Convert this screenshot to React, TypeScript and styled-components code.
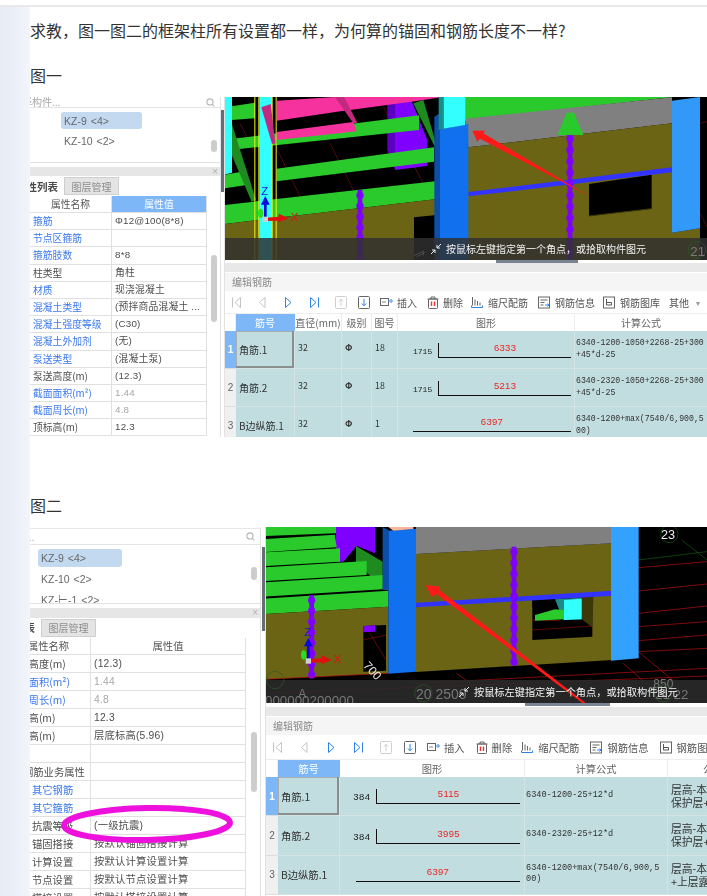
import React from "react";
import styled, { createGlobalStyle } from "styled-components";

const cjk = `"Noto Sans CJK SC", "Noto Sans", sans-serif`;
const latin = `"Liberation Sans", "Noto Sans CJK SC", sans-serif`;
const mono = `"Liberation Mono", "Noto Sans CJK SC", monospace`;

const Global = createGlobalStyle`
  html, body { margin: 0; padding: 0; height: 896px; overflow: hidden; background: #fff; }
  * { box-sizing: border-box; }
`;

const Page = styled.div`
  width: 707px;
  height: 896px;
  overflow: hidden;
  display: flex;
  flex-direction: column;
  font-family: ${cjk};
`;
const TopStrip = styled.div`
  height: 7px;
  flex: none;
  background: #fff;
  border-bottom: 2px solid #e9e9eb;
`;
const Body = styled.div`
  flex: 1;
  display: flex;
  min-height: 0;
`;
const Gutter = styled.div`
  width: 30px;
  flex: none;
  background: linear-gradient(90deg, #e6ebf6 0%, #edf1f9 70%, #f3f5fb 100%);
`;
const Main = styled.main`
  flex: 1;
  min-width: 0;
  padding-top: 11px;
  background: #fff;
`;
const Para = styled.p<{ $top: number }>`
  margin: ${(p) => p.$top}px 0 10px;
  font-size: 16px;
  line-height: 24px;
  color: #333;
  white-space: nowrap;
`;

const Shot = styled.div<{ $h: number }>`
  position: relative;
  height: ${(p) => p.$h}px;
  display: flex;
  overflow: hidden;
  background: #fff;
  filter: blur(0.45px);
`;

/* ---------- left panel ---------- */
const Panel = styled.section<{ $w: number }>`
  position: relative;
  width: ${(p) => p.$w}px;
  flex: none;
  overflow: hidden;
  border-right: 1px solid #e2e2e2;
`;
const SearchRow = styled.div<{ $h: number; $top: number; $lined?: boolean }>`
  height: ${(p) => p.$h}px;
  margin-top: ${(p) => p.$top}px;
  display: flex;
  align-items: center;
  justify-content: space-between;
  padding-right: 5px;
  overflow: hidden;
  border-bottom: 1px solid #e4e4e4;
  border-top: ${(p) => (p.$lined ? "1px solid #e8e8e8" : "0")};
`;
const Placeholder = styled.span<{ $shift: number }>`
  margin-left: ${(p) => p.$shift}px;
  font-size: 10px;
  line-height: 10px;
  color: #a8a8a8;
  white-space: nowrap;
`;
const Tree = styled.div<{ $h: number; $pad: number; $step: number }>`
  height: ${(p) => p.$h}px;
  padding-top: ${(p) => p.$pad}px;
  margin-bottom: 4px;
  border-bottom: 1px solid #e2e2e2;
  overflow: hidden;
  display: flex;
  flex-direction: column;
  gap: ${(p) => p.$step}px;
`;
const TreeItem = styled.div<{ $x: number; $w: number; $on?: boolean; $h: number }>`
  flex: none;
  margin-left: ${(p) => p.$x}px;
  width: ${(p) => p.$w}px;
  height: ${(p) => p.$h}px;
  padding-left: 3px;
  display: flex;
  align-items: center;
  gap: 4px;
  border-radius: 3px;
  background: ${(p) => (p.$on ? "#c3d9f0" : "transparent")};
  font-family: ${latin};
  font-size: 10.5px;
  color: #686868;
  white-space: nowrap;
`;
const Count = styled.span`
  font-size: 10.5px;
`;
const CloseBar = styled.div<{ $h: number }>`
  height: ${(p) => p.$h}px;
  background: #e6e6e6;
  display: flex;
  align-items: center;
  justify-content: flex-end;
  padding-right: 2px;
  font-family: ${latin};
  font-size: 10px;
  line-height: 9px;
  color: #b0b0b0;
`;
const Tabs = styled.div<{ $h: number; $shift: number }>`
  height: ${(p) => p.$h}px;
  margin-left: ${(p) => p.$shift}px;
  padding-top: 1px;
  display: flex;
  font-size: 10px;
`;
const Tab = styled.div<{ $on?: boolean }>`
  width: ${(p) => (p.$on ? 54 : 55)}px;
  height: 18px;
  display: flex;
  align-items: center;
  justify-content: ${(p) => (p.$on ? "flex-start" : "center")};
  padding-left: ${(p) => (p.$on ? 6 : 0)}px;
  font-size: ${(p) => (p.$on ? 10.5 : 10)}px;
  font-weight: ${(p) => (p.$on ? 700 : 400)};
  color: ${(p) => (p.$on ? "#4a4a4a" : "#8d8d8d")};
  background: ${(p) => (p.$on ? "#fff" : "#e4e4e4")};
  border: ${(p) => (p.$on ? "0" : "1px solid #cfcfcf")};
  white-space: nowrap;
`;
const Props = styled.div<{ $name: number; $value: number; $shift: number; $size: number }>`
  width: ${(p) => p.$name + p.$value}px;
  margin-left: ${(p) => p.$shift}px;
  font-size: ${(p) => p.$size}px;
  border-right: 1px solid #e0e0e0;
`;
const PropRow = styled.div<{ $name: number; $h: number }>`
  display: grid;
  grid-template-columns: ${(p) => p.$name}px 1fr;
  height: ${(p) => p.$h}px;
  line-height: ${(p) => p.$h - 1}px;
  border-bottom: 1px solid #e0e0e0;
  white-space: nowrap;
`;
const HeadName = styled.div`
  text-align: center;
  color: #555;
  border-right: 1px solid #e0e0e0;
`;
const HeadValue = styled.div<{ $on?: boolean }>`
  text-align: center;
  color: ${(p) => (p.$on ? "#fff" : "#555")};
  background: ${(p) => (p.$on ? "#7db7f7" : "transparent")};
`;
const NameCell = styled.div<{ $link?: boolean; $indent: number }>`
  padding-left: ${(p) => p.$indent}px;
  color: ${(p) => (p.$link ? "#3b78ee" : "#4e4e4e")};
  border-right: 1px solid #e0e0e0;
  overflow: hidden;
`;
const ValueCell = styled.div<{ $muted?: boolean }>`
  display: flex;
  justify-content: space-between;
  padding: 0 6px 0 3px;
  color: ${(p) => (p.$muted ? "#a6a6a6" : "#4e4e4e")};
  font-family: ${latin}, ${cjk};
  letter-spacing: 0.2px;
`;
const Thumb = styled.div<{ $top: number; $h: number }>`
  position: absolute;
  right: 3px;
  top: ${(p) => p.$top}px;
  width: 6px;
  height: ${(p) => p.$h}px;
  border-radius: 3px;
  background: #cdcdcd;
`;
const Splitter = styled.div<{ $w: number; $top: number; $h: number }>`
  width: ${(p) => p.$w}px;
  flex: none;
  padding: ${(p) => p.$top}px 0 0 ${(p) => p.$w - 3}px;
  &::before {
    content: "";
    display: block;
    width: 3px;
    height: ${(p) => p.$h}px;
    background: #666d76;
  }
`;
const Ring = styled.svg`
  position: absolute;
  left: 30px;
  top: 274px;
  width: 180px;
  height: 50px;
  overflow: visible;
`;

/* ---------- right pane ---------- */
const Pane = styled.section`
  flex: 1;
  min-width: 0;
  overflow: hidden;
  display: flex;
  flex-direction: column;
  border-left: 1px solid #e2e2e2;
`;
const Viewport = styled.div<{ $h: number }>`
  position: relative;
  height: ${(p) => p.$h}px;
  flex: none;
  margin-left: -1px;
`;
const Scene = styled.svg`
  display: block;
  width: 100%;
  height: 100%;
`;
const Caption = styled.div<{ $left: number; $size: number }>`
  position: absolute;
  left: ${(p) => p.$left}px;
  bottom: 4px;
  display: flex;
  align-items: center;
  gap: 4px;
  font-size: ${(p) => p.$size}px;
  line-height: 14px;
  color: #f2f2f2;
  white-space: nowrap;
`;
const Handle = styled.div<{ $left: number; $w: number }>`
  position: absolute;
  left: ${(p) => p.$left}px;
  bottom: -3px;
  width: ${(p) => p.$w}px;
  height: 3px;
  background: #7a8492;
`;
const GreyBar = styled.div<{ $top: number }>`
  height: 9px;
  flex: none;
  margin-top: ${(p) => p.$top}px;
  background: #e8e8e8;
`;
const EditorTitle = styled.div<{ $left: number; $top: number }>`
  height: 18px;
  flex: none;
  margin-top: ${(p) => p.$top}px;
  padding-left: ${(p) => p.$left}px;
  background: #f5f5f5;
  font-size: 10px;
  line-height: 18px;
  color: #8a8a8a;
`;
const Toolbar = styled.div<{ $left: number; $h: number; $size: number }>`
  height: ${(p) => p.$h}px;
  flex: none;
  padding-left: ${(p) => p.$left}px;
  display: flex;
  align-items: center;
  font-size: ${(p) => p.$size}px;
  color: #555;
  white-space: nowrap;
`;
const NavBtn = styled.div<{ $w: number }>`
  width: ${(p) => p.$w}px;
  flex: none;
  display: flex;
  align-items: center;
  height: 14px;
`;
const Action = styled.div<{ $gap: number }>`
  flex: none;
  display: flex;
  align-items: center;
  gap: 4px;
  margin-right: ${(p) => p.$gap}px;
`;
const Caret = styled.span`
  font-size: 8px;
  color: #999;
  margin-left: 3px;
`;
const Grid = styled.div<{ $cols: string; $size: number }>`
  display: grid;
  grid-template-columns: ${(p) => p.$cols};
  font-size: ${(p) => p.$size}px;
  border-top: 1px solid #eee;
`;
const HeadCell = styled.div<{ $on?: boolean; $h: number }>`
  height: ${(p) => p.$h}px;
  line-height: ${(p) => p.$h}px;
  text-align: center;
  white-space: nowrap;
  overflow: hidden;
  color: ${(p) => (p.$on ? "#fff" : "#666")};
  background: ${(p) => (p.$on ? "#7db7f7" : "#fff")};
  border-right: 1px solid ${(p) => (p.$on ? "#7db7f7" : "#ececec")};
`;
const Cell = styled.div<{ $h: number; $focus?: boolean }>`
  height: ${(p) => p.$h}px;
  display: flex;
  align-items: center;
  padding-left: 3px;
  background: #c1dddf;
  border-right: 1px solid #d3e4e5;
  border-bottom: 1px solid #d3e4e5;
  color: #333;
  white-space: nowrap;
  overflow: hidden;
  box-shadow: ${(p) => (p.$focus ? "inset -1px -1px 0 1px #8b8f90, inset 0 0 0 1px #a8aeae" : "none")};
`;
const SimCell = styled(Cell)`
  font-size: 8.8px;
  letter-spacing: 0.2px;
  padding-bottom: 4px;
`;
const NumCell = styled.div<{ $h: number; $on?: boolean }>`
  height: ${(p) => p.$h}px;
  display: flex;
  align-items: center;
  justify-content: center;
  font-family: ${latin};
  font-size: 10px;
  color: ${(p) => (p.$on ? "#fff" : "#666")};
  font-weight: ${(p) => (p.$on ? 700 : 400)};
  background: ${(p) => (p.$on ? "#7db7f7" : "#f0f0f0")};
  border-bottom: 1px solid #ddd;
`;
const Formula = styled.div<{ $size: number }>`
  font-family: ${mono};
  font-size: ${(p) => p.$size}px;
  line-height: 11.7px;
  white-space: pre;
  color: #333;
  margin-left: -2px;
  padding-bottom: 1px;
`;
const Desc = styled.div`
  font-size: 10.8px;
  line-height: 13px;
  white-space: pre;
  color: #333;
`;
const ShapeWrap = styled.div<{ $left: number; $right: number; $bottom: number }>`
  flex: 1;
  min-width: 0;
  align-self: stretch;
  display: flex;
  align-items: flex-end;
  gap: 6px;
  margin-left: -3px;
  padding: 0 ${(p) => p.$right}px ${(p) => p.$bottom}px ${(p) => p.$left}px;
`;
const HookNum = styled.span<{ $size: number }>`
  font-family: ${mono};
  font-size: ${(p) => p.$size}px;
  color: #222;
  line-height: 10px;
  margin-bottom: 1px;
`;
const Bar = styled.div<{ $hook?: boolean }>`
  flex: 1;
  height: 15px;
  border-bottom: 1.5px solid #111;
  border-left: ${(p) => (p.$hook ? "1.5px solid #111" : "0")};
  text-align: center;
  font-family: ${latin};
  font-size: 9.5px;
  line-height: 9px;
  letter-spacing: 0.3px;
  color: #ee2222;
`;

/* ---------- toolbar icons ---------- */
const Ico: React.FC<{ children: React.ReactNode; w?: number }> = ({ children, w = 12 }) => (
  <svg width={w} height="13" viewBox={`0 0 ${w} 13`} fill="none" strokeWidth="1">
    {children}
  </svg>
);
const IconFirst = () => (
  <Ico><path d="M1.5 1.5v10M9.5 1.5 4 6.5l5.5 5z" stroke="#c4c4c4" /></Ico>
);
const IconPrev = () => (
  <Ico><path d="M8 1.5 2.5 6.5 8 11.5z" stroke="#c4c4c4" /></Ico>
);
const IconNext = () => (
  <Ico><path d="M2.5 1.5 8 6.5l-5.5 5z" stroke="#2d83e6" /></Ico>
);
const IconLast = () => (
  <Ico><path d="M1.5 1.5 7 6.5l-5.5 5zM9.5 1.5v10" stroke="#2d83e6" /></Ico>
);
const IconUp = () => (
  <Ico>
    <rect x="0.5" y="0.5" width="11" height="12" rx="1" stroke="#cfcfcf" />
    <path d="M6 10V3.5M3.8 5.5 6 3.2l2.2 2.3" stroke="#cfcfcf" />
  </Ico>
);
const IconDown = () => (
  <Ico>
    <rect x="0.5" y="0.5" width="11" height="12" rx="1" stroke="#666" />
    <path d="M6 3v6.5M3.8 7.5 6 9.8l2.2-2.3" stroke="#2d83e6" />
  </Ico>
);
const IconInsert = () => (
  <Ico w={13}>
    <rect x="0.5" y="2.5" width="8" height="7" stroke="#666" />
    <path d="M2 6h4" stroke="#888" />
    <path d="M8.5 5h3M10.5 3l2 2-2 2" stroke="#2d83e6" />
  </Ico>
);
const IconTrash = () => (
  <Ico>
    <path d="M.5 3h11M4 3V1h4v2" stroke="#666" />
    <rect x="1.5" y="3" width="9" height="9.5" rx="1" stroke="#666" />
    <path d="M4.5 5.5v4.5M7.5 5.5v4.5" stroke="#e33" strokeWidth="1.4" />
  </Ico>
);
const IconChart = () => (
  <Ico w={13}>
    <path d="M1.5 1v8.5M4 3.5v6M6.5 5v4.5M9 6.5v3" stroke="#666" />
    <path d="M.5 11.5h11M.5 9.5v2M11.5 9.5v2" stroke="#2d83e6" />
  </Ico>
);
const IconInfo = () => (
  <Ico w={13}>
    <rect x="0.5" y="1" width="11" height="11" stroke="#666" />
    <path d="M2.5 4h7M2.5 6.5h4M2.5 9h3" stroke="#666" />
    <path d="M7 9h4M9.5 7.5l1.5 1.5-1.5 1.5" stroke="#2d83e6" />
  </Ico>
);
const IconLib = () => (
  <Ico w={13}>
    <rect x="0.5" y="1" width="11" height="11" stroke="#666" />
    <path d="M3.5 3v6h5V6.5h-5" stroke="#555" />
  </Ico>
);
const IconSearch = () => (
  <svg width="9" height="9" viewBox="0 0 10 10" fill="none" stroke="#b5b5b5" strokeWidth="1.2">
    <circle cx="4.4" cy="4.4" r="3.4" />
    <path d="M7 7l2.4 2.4" />
  </svg>
);
const IconCorner = () => (
  <svg width="12" height="12" viewBox="0 0 12 12" fill="none" stroke="#eee" strokeWidth="1">
    <path d="M11 1 7 5M7 2v3h3M1 11l4-4M2 7h3v3" />
  </svg>
);

/* ---------- 3D scene primitives ---------- */
const Rebar: React.FC<{ x: number; y1: number; y2: number; step?: number }> = ({ x, y1, y2, step = 33 }) => {
  const beads: number[] = [];
  for (let y = y1 + 16; y < y2; y += step) beads.push(y);
  return (
    <g fill="#7f00ff">
      <rect x={x - 7} y={y1} width={14} height={y2 - y1} />
      {beads.map((y) => (
        <circle key={y} cx={x} cy={y} r={11} />
      ))}
    </g>
  );
};
const Poly: React.FC<{ p: string; f: string }> = ({ p, f }) => <polygon points={p} fill={f} />;

const GREEN = "#2ac92c";
const DGREEN = "#1f8a20";
const OLIVE = "#6b6414";
const AXIS = `"Liberation Sans", sans-serif`;

const Gizmo: React.FC<{ x: number; y: number }> = ({ x, y }) => (
  <g>
    <ellipse cx={x - 14} cy={y - 18} rx={8} ry={14} fill="#22e022" />
    <Poly p={`${x - 4},${y} ${x - 4},${y - 44} ${x - 13},${y - 44} ${x},${y - 70} ${x + 13},${y - 44} ${x + 4},${y - 44} ${x + 4},${y}`} f="#0a0ae0" />
    <Poly p={`${x},${y - 5} ${x + 40},${y - 8} ${x + 40},${y - 17} ${x + 70},${y - 3} ${x + 40},${y + 9} ${x + 40},${y + 4} ${x},${y + 5}`} f="#e01010" />
    <rect x={x - 8} y={y - 8} width={16} height={16} fill="#cfcfcf" />
    <text x={x + 76} y={y + 6} fontFamily={AXIS} fontSize="34" fill="#e01010">X</text>
    <text x={x - 12} y={y - 74} fontFamily={AXIS} fontSize="34" fill="#1414e0">Z</text>
  </g>
);

const SceneOne = () => (
  <Scene viewBox="12 21 1449 489" preserveAspectRatio="none">
    <rect x="12" y="21" width="1449" height="489" fill="#000" />
    <g stroke="#a01414" strokeWidth="1.5" fill="none">
      <path d="M170 175 250 340M330 160 400 300M490 50 620 300M60 100 100 180" />
      <path d="M1440 100 1461 95M1440 370 1461 410M1400 430 1461 510" />
    </g>
    <Poly p="502,21 525,21 525,238 502,180" f="#5c00c0" />
    <Poly p="525,21 570,21 622,150 622,228 525,240" f="#7f00ff" />
    <Poly p="12,52 105,38 105,85 12,92" f={GREEN} />
    <Poly p="12,150 597,76 597,120 12,182" f={GREEN} />
    <Poly p="12,255 80,242 80,285 12,295" f={GREEN} />
    <Poly p="170,236 642,172 642,215 170,274" f={GREEN} />
    <Poly p="35,100 12,112 12,140 95,335 108,330" f={DGREEN} />
    <Poly p="580,40 610,30 645,150 645,172" f={DGREEN} />
    <Poly p="12,21 36,21 36,248 12,254" f="#33ffff" />
    <Poly p="12,345 658,272 658,326 12,402" f={GREEN} />
    <Poly p="12,402 658,326 658,510 12,510" f={OLIVE} />
    <Poly p="582,382 650,375 650,510 582,510" f="#000" />
    <Rebar x={420} y1={300} y2={510} step={32} />
    <rect x="118" y="21" width="38" height="489" fill="#33ffff" />
    <g fill="#f2f21a">
      <rect x="103" y="21" width="3" height="489" />
      <rect x="115" y="21" width="3" height="489" />
      <rect x="155" y="21" width="3" height="489" />
      <rect x="167" y="21" width="3" height="489" />
    </g>
    <Poly p="124,52 152,42 166,160 156,162" f="#c2297f" />
    <Poly p="170,32 345,21 668,21 585,34 362,64 170,92" f="#f5329d" />
    <Poly p="345,21 372,21 412,98 400,100" f="#c2297f" />
    <Poly p="170,126 400,96 410,124 170,150" f="#f5329d" />
    <path d="M170 150v10h18M385 125v10h25v-12" stroke={GREEN} strokeWidth="2" fill="none" />
    <Poly p="735,21 1360,21 735,90" f={GREEN} />
    <Poly p="735,86 1356,22 1356,100 745,172" f="#808080" />
    <Poly p="745,172 1356,100 1356,428 1440,415 1440,510 660,510 660,300" f={OLIVE} />
    <Poly p="1107,282 1295,254 1295,356 1107,378" f="#000" />
    <path d="M1107 378 1295 356" stroke="#3c3808" strokeWidth="3" fill="none" />
    <Poly p="745,306 1356,232 1356,247 745,319" f="#3333ff" />
    <Rebar x={1050} y1={130} y2={510} step={34} />
    <Poly p="1040,68 1062,68 1090,135 1012,135" f={GREEN} />
    <Poly p="643,80 660,70 660,510 643,510" f="#0d4ea8" />
    <Poly p="660,118 745,102 745,510 660,510" f="#1070ee" />
    <Poly p="670,21 736,21 736,105 670,116" f="#33ffff" />
    <Poly p="656,21 670,21 670,116 656,120" f="#14908a" />
    <Poly p="1356,32 1440,21 1440,415 1356,428" f="#3399f8" />
    <Poly p="1112,321 780,146 772,155 757,122 796,122 790,130" f="#ff1a1a" />
    <Gizmo x={136} y={388} />
    <rect x="12" y="444" width="1449" height="66" fill="#303030" fillOpacity="0.84" />
    <path d="M582 497 612 483M590 500l24-12M610 497v-12" stroke="#888" fill="none" />
    <circle cx="1431" cy="480" r="26" fill="none" stroke="#2b5a2b" strokeWidth="2" />
    <text x="1411" y="497" fontFamily={AXIS} fontSize="40" fill="#7a7a7a">21</text>
  </Scene>
);

const SceneTwo = () => (
  <Scene viewBox="15 21 1326 528" preserveAspectRatio="none">
    <rect x="15" y="21" width="1326" height="528" fill="#000" />
    <g stroke="#c01010" strokeWidth="2" fill="none">
      <path d="M1135 143 1341 125M1135 213 1341 192M1135 280 1341 258M1135 320 1341 305M1135 362 1341 345M1135 395 1341 385" />
      <path d="M468 490 1341 445M15 520 1341 468M1135 395 1250 490M1090 430 1180 510M590 460 700 540M820 320 990 320" />
    </g>
    <g stroke="#1c7a1c" strokeWidth="1.5" fill="none">
      <path d="M1135 120 1341 95M1265 60 1341 120" />
      <circle cx="1228" cy="42" r="26" />
    </g>
    <text x="1203" y="57" fontFamily={AXIS} fontSize="38" fill="#f0f0f0">23</text>
    <Poly p="228,21 345,21 345,100 290,78 250,125 228,125" f="#7f00ff" />
    <Poly p="345,40 368,60 368,115 345,100" f="#000" />
    <Poly p="15,21 228,21 228,40 15,48" f={GREEN} />
    <Poly p="15,57 225,44 230,82 15,96" f={GREEN} />
    <Poly p="15,97 240,85 240,125 15,138" f={GREEN} />
    <Poly p="288,78 368,125 368,205 288,125" f={DGREEN} />
    <Poly p="15,142 320,123 320,165 15,183" f={GREEN} />
    <Poly p="15,187 368,165 368,208 15,230" f={GREEN} />
    <Poly p="15,236 385,212 385,260 15,282" f={GREEN} />
    <Poly p="15,282 385,260 385,460 15,478" f={OLIVE} />
    <Poly p="310,318 378,315 378,452 310,455" f="#000" />
    <path d="M310 360 378 345M330 340 378 420" stroke="#c01010" strokeWidth="1.5" />
    <Poly p="310,318 345,316 345,335 310,337" f="#7f00ff" />
    <Rebar x={155} y1={225} y2={472} step={32} />
    <Poly p="468,102 1056,70 1056,420 468,456" f={OLIVE} />
    <Poly p="468,21 1056,21 1056,70 468,102" f="#808080" />
    <Poly p="817,240 997,230 997,350 817,360" f="#000" />
    <Poly p="965,232 1000,230 997,322 965,298" f="#3c3808" />
    <path d="M817 330 997 318M817 300 900 302" stroke="#c01010" strokeWidth="1.5" />
    <Poly p="885,238 965,233 965,298 910,300" f="#1f8a8a" />
    <Poly p="912,240 965,236 965,298 912,300" f="#33ffff" />
    <Poly p="825,285 885,268 912,270 912,298 825,302" f={GREEN} />
    <Poly p="817,240 885,238 885,258 817,262" f="#000" />
    <Poly p="468,248 1056,212 1056,227 468,262" f="#3333ff" />
    <Rebar x={762} y1={80} y2={436} step={33} />
    <Poly p="368,21 385,30 385,210 368,210" f="#0d4ea8" />
    <Poly p="385,32 468,26 468,455 385,461" f="#1070ee" />
    <Poly p="385,21 460,21 460,27 400,32" f="#f6b59a" />
    <Poly p="1053,21 1136,21 1136,415 1053,422" f="#33a2ff" />
    <Gizmo x={145} y={423} />
    <rect x="15" y="480" width="1326" height="69" fill="#2a2a2a" fillOpacity="0.9" />
    <path d="M15 478 385 460" stroke="#c01010" strokeWidth="2" />
    <g fill="#777" fontFamily={AXIS}>
      <text x="468" y="538" fontSize="42">20 2500</text>
      <text x="1185" y="538" fontSize="40">21 22</text>
      <text x="1180" y="505" fontSize="36">850</text>
      <text x="115" y="535" fontSize="36">A</text>
      <text x="15" y="556" fontSize="40">000000200000</text>
      <circle cx="45" cy="480" r="26" fill="none" stroke="#2b5a2b" strokeWidth="2" />
      <circle cx="490" cy="520" r="26" fill="none" stroke="#2b5a2b" strokeWidth="2" />
      <circle cx="1210" cy="520" r="26" fill="none" stroke="#2b5a2b" strokeWidth="2" />
    </g>
    <text x="300" y="468" transform="rotate(48 338 462)" fontFamily={AXIS} fontSize="36" fill="#e8e8e8">700</text>
    <Poly p="985,555 975,555 528,221 515,232 497,195 540,200 538,210" f="#ff1a1a" />
  </Scene>
);

/* ---------- data ---------- */
type PropItem = { n: string; v?: string; link?: boolean; muted?: boolean; more?: boolean; indent?: number };
const propsOne: PropItem[] = [
  { n: "箍筋", v: "Φ12@100(8*8)", link: true },
  { n: "节点区箍筋", link: true },
  { n: "箍筋肢数", v: "8*8", link: true },
  { n: "柱类型", v: "角柱" },
  { n: "材质", v: "现浇混凝土", link: true },
  { n: "混凝土类型", v: "(预拌商品混凝土", link: true, more: true },
  { n: "混凝土强度等级", v: "(C30)", link: true },
  { n: "混凝土外加剂", v: "(无)", link: true },
  { n: "泵送类型", v: "(混凝土泵)", link: true },
  { n: "泵送高度(m)", v: "(12.3)" },
  { n: "截面面积(m²)", v: "1.44", link: true, muted: true },
  { n: "截面周长(m)", v: "4.8", link: true, muted: true },
  { n: "顶标高(m)", v: "12.3" },
];
const propsTwo: PropItem[] = [
  { n: "泵送高度(m)", v: "(12.3)" },
  { n: "截面面积(m²)", v: "1.44", link: true, muted: true },
  { n: "截面周长(m)", v: "4.8", link: true, muted: true },
  { n: "顶标高(m)", v: "12.3" },
  { n: "底标高(m)", v: "层底标高(5.96)" },
  { n: "" },
  { n: "钢筋业务属性", indent: 16 },
  { n: "其它钢筋", link: true, indent: 25 },
  { n: "其它箍筋", link: true, indent: 25 },
  { n: "抗震等级", v: "(一级抗震)", indent: 25 },
  { n: "锚固搭接", v: "按默认锚固搭接计算", indent: 25 },
  { n: "计算设置", v: "按默认计算设置计算", indent: 25 },
  { n: "节点设置", v: "按默认节点设置计算", indent: 25 },
  { n: "搭接设置", v: "按默认搭接设置计算", indent: 25 },
];

type PanelCfg = {
  w: number;
  search: { h: number; top: number; lined?: boolean; text: string; shift: number };
  tree: { h: number; pad: number; step: number; x: number; itemW: number; itemH: number; items: [string, string][] };
  bar: number;
  tabs: { h: number; shift: number };
  table: { name: number; value: number; shift: number; size: number; rowH: number; headOn: boolean; rows: PropItem[]; indent: number };
  thumbs: [number, number][];
};

const LeftPanel: React.FC<{ c: PanelCfg; children?: React.ReactNode }> = ({ c, children }) => (
  <Panel $w={c.w}>
    <SearchRow $h={c.search.h} $top={c.search.top} $lined={c.search.lined}>
      <Placeholder $shift={c.search.shift}>{c.search.text}</Placeholder>
      <IconSearch />
    </SearchRow>
    <Tree $h={c.tree.h} $pad={c.tree.pad} $step={c.tree.step}>
      {c.tree.items.map(([name, count], i) => (
        <TreeItem key={name} $x={c.tree.x} $w={c.tree.itemW} $h={c.tree.itemH} $on={i === 0}>
          {name}
          <Count>{count}</Count>
        </TreeItem>
      ))}
    </Tree>
    <CloseBar $h={c.bar}>×</CloseBar>
    <Tabs $h={c.tabs.h} $shift={c.tabs.shift}>
      <Tab $on>属性列表</Tab>
      <Tab>图层管理</Tab>
    </Tabs>
    <Props $name={c.table.name} $value={c.table.value} $shift={c.table.shift} $size={c.table.size}>
      <PropRow $name={c.table.name} $h={17}>
        <HeadName>属性名称</HeadName>
        <HeadValue $on={c.table.headOn}>属性值</HeadValue>
      </PropRow>
      {c.table.rows.map((r, i) => (
        <PropRow key={i} $name={c.table.name} $h={c.table.rowH}>
          <NameCell $link={r.link} $indent={r.indent ?? c.table.indent}>{r.n}</NameCell>
          <ValueCell $muted={r.muted}>
            <span>{r.v}</span>
            {r.more && <span>...</span>}
          </ValueCell>
        </PropRow>
      ))}
    </Props>
    {c.thumbs.map(([top, h]) => (
      <Thumb key={top} $top={top} $h={h} />
    ))}
    {children}
  </Panel>
);

const ToolRow: React.FC<{ nav: number; gaps: number[]; left: number; h: number; size: number; cut?: boolean }> = ({ nav, gaps, left, h, size, cut }) => (
  <Toolbar $left={left} $h={h} $size={size}>
    <NavBtn $w={nav}><IconFirst /></NavBtn>
    <NavBtn $w={nav}><IconPrev /></NavBtn>
    <NavBtn $w={nav}><IconNext /></NavBtn>
    <NavBtn $w={nav}><IconLast /></NavBtn>
    <NavBtn $w={nav - 3}><IconUp /></NavBtn>
    <NavBtn $w={nav - 4}><IconDown /></NavBtn>
    <Action $gap={gaps[0]}><IconInsert />插入</Action>
    <Action $gap={gaps[1]}><IconTrash />删除</Action>
    <Action $gap={gaps[2]}><IconChart />缩尺配筋</Action>
    <Action $gap={gaps[3]}><IconInfo />钢筋信息</Action>
    <Action $gap={gaps[4]}><IconLib />钢筋图库</Action>
    {!cut && <Action $gap={0}>其他<Caret>▾</Caret></Action>}
  </Toolbar>
);

const Shape: React.FC<{ hook?: string; label: string; left: number; right: number; hookSize: number; bottom: number }> = ({ hook, label, left, right, hookSize, bottom }) => (
  <ShapeWrap $left={left} $right={right} $bottom={bottom}>
    {hook && <HookNum $size={hookSize}>{hook}</HookNum>}
    <Bar $hook={!!hook}>{label}</Bar>
  </ShapeWrap>
);

const panelOne: PanelCfg = {
  w: 191,
  search: { h: 11, top: 0, text: "选择构件...", shift: -18 },
  tree: { h: 55, pad: 4, step: 3, x: 31, itemW: 81, itemH: 17, items: [["KZ-9", "<4>"], ["KZ-10", "<2>"]] },
  bar: 9,
  tabs: { h: 20, shift: -20 },
  table: { name: 82, value: 95, shift: 0, size: 9.8, rowH: 17.2, headOn: true, rows: propsOne, indent: 3 },
  thumbs: [[43, 12], [158, 67]],
};
const panelTwo: PanelCfg = {
  w: 231,
  search: { h: 17, top: 1, lined: true, text: "选择构件...", shift: -44 },
  tree: { h: 59, pad: 4, step: 3, x: 8, itemW: 84, itemH: 18, items: [["KZ-9", "<4>"], ["KZ-10", "<2>"], ["KZ-⊢-1", "<2>"]] },
  bar: 9.5,
  tabs: { h: 20.5, shift: -43 },
  table: { name: 84, value: 155, shift: -23, size: 10.3, rowH: 18, headOn: false, rows: propsTwo, indent: 1 },
  thumbs: [[40, 13], [205, 60]],
};

const EditorOne = () => {
  const H = 38;
  const rows = [
    { name: "角筋.1", d: "32", no: "18", hook: "1715", label: "6333", f: "6340-1200-1050+2268-25+300\n+45*d-25" },
    { name: "角筋.2", d: "32", no: "18", hook: "1715", label: "5213", f: "6340-2320-1050+2268-25+300\n+45*d-25" },
    { name: "B边纵筋.1", d: "32", no: "1", hook: undefined, label: "6397", f: "6340-1200+max(7540/6,900,5\n00)" },
  ];
  return (
    <Grid $cols="11px 59px 47px 30px 26px 177px 133px" $size={10}>
      <HeadCell $h={17} />
      <HeadCell $h={17} $on>筋号</HeadCell>
      <HeadCell $h={17}>直径(mm)</HeadCell>
      <HeadCell $h={17}>级别</HeadCell>
      <HeadCell $h={17}>图号</HeadCell>
      <HeadCell $h={17}>图形</HeadCell>
      <HeadCell $h={17}>计算公式</HeadCell>
      {rows.map((r, i) => (
        <React.Fragment key={r.name}>
          <NumCell $h={H} $on={i === 0}>{i + 1}</NumCell>
          <Cell $h={H} $focus={i === 0}>{r.name}</Cell>
          <SimCell $h={H}>{r.d}</SimCell>
          <SimCell $h={H}><b>Φ</b></SimCell>
          <SimCell $h={H}>{r.no}</SimCell>
          <Cell $h={H}>
            <Shape hook={r.hook} label={r.label} left={15} right={3} hookSize={8} bottom={r.hook ? 10 : 12} />
          </Cell>
          <Cell $h={H}><Formula $size={8.2}>{r.f}</Formula></Cell>
        </React.Fragment>
      ))}
    </Grid>
  );
};

const EditorTwo = () => {
  const H = 39.3;
  const rows = [
    { name: "角筋.1", hook: "384", label: "5115", f: "6340-1200-25+12*d", d: "层高-本层的露出\n保护层+节点设置" },
    { name: "角筋.2", hook: "384", label: "3995", f: "6340-2320-25+12*d", d: "层高-本层的露出\n保护层+节点设置" },
    { name: "B边纵筋.1", hook: undefined, label: "6397", f: "6340-1200+max(7540/6,900,5\n00)", d: "层高-本层的露出\n+上层露出长度" },
  ];
  return (
    <Grid $cols="12px 62px 185px 143px 112px" $size={10.3}>
      <HeadCell $h={17} />
      <HeadCell $h={17} $on>筋号</HeadCell>
      <HeadCell $h={17}>图形</HeadCell>
      <HeadCell $h={17}>计算公式</HeadCell>
      <HeadCell $h={17}>公式描述</HeadCell>
      {rows.map((r, i) => (
        <React.Fragment key={r.name}>
          <NumCell $h={H} $on={i === 0}>{i + 1}</NumCell>
          <Cell $h={H} $focus={i === 0}>{r.name}</Cell>
          <Cell $h={H}>
            <Shape hook={r.hook} label={r.label} left={r.hook ? 13 : 16} right={4} hookSize={9.6} bottom={r.hook ? 11 : 12} />
          </Cell>
          <Cell $h={H}><Formula $size={8.55}>{r.f}</Formula></Cell>
          <Cell $h={H}><Desc>{r.d}</Desc></Cell>
        </React.Fragment>
      ))}
    </Grid>
  );
};

const App: React.FC = () => (
  <>
    <Global />
    <Page>
      <TopStrip />
      <Body>
        <Gutter />
        <Main>
          <Para $top={0}>求教，图一图二的框架柱所有设置都一样，为何算的锚固和钢筋长度不一样?</Para>
          <Para $top={21}>图一</Para>
          <Shot $h={340}>
            <LeftPanel c={panelOne} />
            <Splitter $w={3} $top={13} $h={82} />
            <Pane>
              <Viewport $h={163}>
                <SceneOne />
                <Caption $left={206} $size={10}>
                  <IconCorner />
                  按鼠标左键指定第一个角点，或拾取构件图元
                </Caption>
                <Handle $left={272} $w={82} />
              </Viewport>
              <GreyBar $top={3} />
              <EditorTitle $left={7} $top={1}>编辑钢筋</EditorTitle>
              <ToolRow nav={26} gaps={[10, 8, 10, 8, 9]} left={6} h={22} size={10} />
              <EditorOne />
            </Pane>
          </Shot>
          <Para $top={56}>图二</Para>
          <Shot $h={369}>
            <LeftPanel c={panelTwo}>
              <Ring viewBox="0 0 180 50">
                <ellipse cx="87" cy="23" rx="83" ry="16" transform="rotate(-1 87 23)" fill="none" stroke="#ee11dd" strokeWidth="6" />
              </Ring>
            </LeftPanel>
            <Splitter $w={4} $top={20} $h={84} />
            <Pane>
              <Viewport $h={176}>
                <SceneTwo />
                <Caption $left={193} $size={10.2}>
                  <IconCorner />
                  按鼠标左键指定第一个角点，或拾取构件图元
                </Caption>
                <Handle $left={260} $w={85} />
              </Viewport>
              <GreyBar $top={4} />
              <EditorTitle $left={7} $top={1}>编辑钢筋</EditorTitle>
              <ToolRow nav={27} gaps={[11, 9, 11, 11, 0]} left={6} h={24} size={10.3} cut />
              <EditorTwo />
            </Pane>
          </Shot>
        </Main>
      </Body>
    </Page>
  </>
);

export default App;
